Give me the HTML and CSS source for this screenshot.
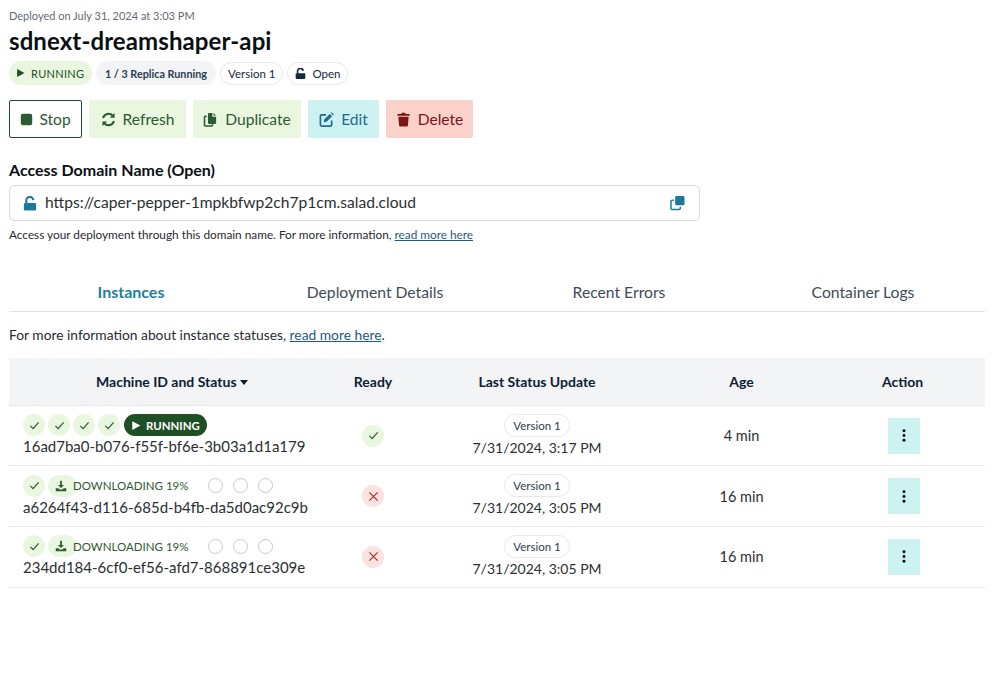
FILE: index.html
```html
<!DOCTYPE html>
<html lang="en">
<head>
<meta charset="UTF-8">
<title>sdnext-dreamshaper-api</title>
<link rel="stylesheet" href="styles.css">
</head>
<body>
<svg class="defs" width="0" height="0">
  <symbol id="i-check" viewBox="0 0 16 16"><path d="M2 8.500l4 4 8-9" fill="none" stroke="currentColor" stroke-width="1.800"/></symbol>
  <symbol id="i-play" viewBox="0 0 16 16"><path d="M2 1v14l13-7z" fill="currentColor"/></symbol>
  <symbol id="i-lock" viewBox="0 0 16 16"><rect x="1" y="7.500" width="14" height="8.500" rx="1.500" fill="currentColor"/><path d="M3.800 8V4.800a4 4 0 0 1 8-.6" fill="none" stroke="currentColor" stroke-width="2.400"/></symbol>
  <symbol id="i-download" viewBox="0 0 16 16"><path d="M6.800 1h2.400v5.500H12L8 10.500 4 6.500h2.800zM1 11h3.500L6 12.500h4l1.500-1.500H15v4H1z" fill="currentColor"/></symbol>
  <symbol id="i-x" viewBox="0 0 16 16"><path d="M2 2l12 12M14 2L2 14" fill="none" stroke="currentColor" stroke-width="1.600"/></symbol>
  <symbol id="i-dots" viewBox="0 0 4 14"><circle cx="2" cy="2" r="1.600" fill="currentColor"/><circle cx="2" cy="7" r="1.600" fill="currentColor"/><circle cx="2" cy="12" r="1.600" fill="currentColor"/></symbol>
  <symbol id="i-copy" viewBox="0 0 16 16"><rect x="5.500" y="0.500" width="10" height="10" rx="1.500" fill="currentColor"/><path d="M4 5H2.500A1.500 1.500 0 0 0 1 6.500v7A1.500 1.500 0 0 0 2.500 15h7a1.500 1.500 0 0 0 1.500-1.500V12" fill="none" stroke="currentColor" stroke-width="1.600"/></symbol>
</svg>

<p class="deployed">Deployed on July 31, 2024 at 3:03 PM</p>
<h1 class="title">sdnext-dreamshaper-api</h1>

<div class="badges">
  <span class="badge badge-green"><svg class="badge-icon"><use href="#i-play"/></svg>RUNNING</span>
  <span class="badge badge-grey">1 / 3 Replica Running</span>
  <span class="badge badge-outline">Version 1</span>
  <span class="badge badge-outline"><svg class="badge-icon lock-icon"><use href="#i-lock"/></svg>Open</span>
</div>

<div class="actions">
  <button class="btn btn-stop"><svg class="btn-icon stop-icon" viewBox="0 0 16 16"><rect x="1" y="1" width="14" height="14" rx="2.500" fill="currentColor"/></svg>Stop</button>
  <button class="btn btn-green btn-refresh"><svg class="btn-icon" viewBox="0 0 16 16"><path d="M2.200 6.500A6 6 0 0 1 12.500 4M13.800 9.500A6 6 0 0 1 3.500 12" fill="none" stroke="currentColor" stroke-width="2.200"/><path d="M14.500 1v5h-5zM1.500 15v-5h5z" fill="currentColor"/></svg>Refresh</button>
  <button class="btn btn-green btn-duplicate"><svg class="btn-icon" viewBox="0 0 16 16"><path d="M6.500 1H10v4h4v6.500a1.200 1.200 0 0 1-1.200 1.200H6.500a1.200 1.200 0 0 1-1.200-1.200V2.200A1.200 1.200 0 0 1 6.500 1zM11.200 1L14 3.800h-2.800z" fill="currentColor"/><path d="M4 4.500H2.800A1.200 1.200 0 0 0 1.600 5.700v8.100A1.200 1.200 0 0 0 2.800 15h6.100a1.200 1.200 0 0 0 1.200-1.200V13" fill="none" stroke="currentColor" stroke-width="1.700"/></svg>Duplicate</button>
  <button class="btn btn-blue"><svg class="btn-icon" viewBox="0 0 16 16"><path d="M7.500 3H2.800A1.300 1.300 0 0 0 1.500 4.300v9.400A1.300 1.300 0 0 0 2.800 15h9.400a1.300 1.300 0 0 0 1.300-1.300V9" fill="none" stroke="currentColor" stroke-width="1.800"/><path d="M11.500 2l2.500 2.500L8 10.500l-3 .5.500-3zM12.500 1l1-.7 2.300 2.300-.8 1z" fill="currentColor"/></svg>Edit</button>
  <button class="btn btn-red"><svg class="btn-icon" viewBox="0 0 16 16"><path d="M1.500 2h4L6.300.8h3.400l.8 1.200h4V4h-13zM2.500 5h11l-.8 9.500a1.200 1.200 0 0 1-1.200 1h-7a1.200 1.200 0 0 1-1.200-1z" fill="currentColor"/></svg>Delete</button>
</div>

<h2 class="domain-label">Access Domain Name (Open)</h2>
<div class="domain-box">
  <svg class="domain-lock"><use href="#i-lock"/></svg>
  <span class="domain-url">https://caper-pepper-1mpkbfwp2ch7p1cm.salad.cloud</span>
  <svg class="domain-copy"><use href="#i-copy"/></svg>
</div>
<p class="domain-help">Access your deployment through this domain name. For more information, <a href="#">read more here</a></p>

<div class="tabs">
  <div class="tab tab-active">Instances</div>
  <div class="tab">Deployment Details</div>
  <div class="tab">Recent Errors</div>
  <div class="tab">Container Logs</div>
</div>

<p class="status-help">For more information about instance statuses, <a href="#">read more here</a>.</p>

<table class="instances">
  <thead>
    <tr>
      <th class="col-machine">Machine ID and Status <span class="caret"></span></th>
      <th class="col-ready">Ready</th>
      <th class="col-update">Last Status Update</th>
      <th class="col-age">Age</th>
      <th>Action</th>
    </tr>
  </thead>
  <tbody>
    <tr>
      <td class="machine">
        <div class="steps">
          <span class="step"><svg><use href="#i-check"/></svg></span>
          <span class="step"><svg><use href="#i-check"/></svg></span>
          <span class="step"><svg><use href="#i-check"/></svg></span>
          <span class="step"><svg><use href="#i-check"/></svg></span>
          <span class="step-running"><svg><use href="#i-play"/></svg>RUNNING</span>
        </div>
        <div class="machine-id">16ad7ba0-b076-f55f-bf6e-3b03a1d1a179</div>
      </td>
      <td><span class="ready ready-yes"><svg><use href="#i-check"/></svg></span></td>
      <td class="update"><span class="version">Version 1</span><div class="when">7/31/2024, 3:17 PM</div></td>
      <td>4 min</td>
      <td class="action"><button class="more"><svg><use href="#i-dots"/></svg></button></td>
    </tr>
    <tr>
      <td class="machine">
        <div class="steps">
          <span class="step"><svg><use href="#i-check"/></svg></span>
          <span class="step step-active"><svg><use href="#i-download"/></svg><span class="step-text">DOWNLOADING 19%</span></span>
          <span class="step-empty"></span>
          <span class="step-empty"></span>
          <span class="step-empty"></span>
        </div>
        <div class="machine-id">a6264f43-d116-685d-b4fb-da5d0ac92c9b</div>
      </td>
      <td><span class="ready ready-no"><svg><use href="#i-x"/></svg></span></td>
      <td class="update"><span class="version">Version 1</span><div class="when">7/31/2024, 3:05 PM</div></td>
      <td>16 min</td>
      <td class="action"><button class="more"><svg><use href="#i-dots"/></svg></button></td>
    </tr>
    <tr>
      <td class="machine">
        <div class="steps">
          <span class="step"><svg><use href="#i-check"/></svg></span>
          <span class="step step-active"><svg><use href="#i-download"/></svg><span class="step-text">DOWNLOADING 19%</span></span>
          <span class="step-empty"></span>
          <span class="step-empty"></span>
          <span class="step-empty"></span>
        </div>
        <div class="machine-id">234dd184-6cf0-ef56-afd7-868891ce309e</div>
      </td>
      <td><span class="ready ready-no"><svg><use href="#i-x"/></svg></span></td>
      <td class="update"><span class="version">Version 1</span><div class="when">7/31/2024, 3:05 PM</div></td>
      <td>16 min</td>
      <td class="action"><button class="more"><svg><use href="#i-dots"/></svg></button></td>
    </tr>
  </tbody>
</table>
</body>
</html>
```

FILE: styles.css
```css
* {
  box-sizing: border-box;
}
html, body {
  overflow: hidden;
}
body {
  margin: 0;
  padding: 9px 15px 0 9px;
  height: 691px;
  background: #fff;
  color: #0a2133;
  font-family: Lato, sans-serif;
}
.defs {
  position: absolute;
}
a {
  color: #1d5a85;
}

.deployed {
  margin: 0;
  font-size: 11px;
  line-height: 14px;
  color: #5f6b76;
}
.title {
  margin: 4px 0 0;
  font-size: 24px;
  line-height: 28px;
  font-weight: 700;
  letter-spacing: 0.1px;
  color: #0a0f14;
}

.badges {
  display: flex;
  align-items: center;
  gap: 4px;
  margin-top: 6px;
}
.badge {
  display: flex;
  align-items: center;
  height: 24px;
  padding: 0 7px;
  border-radius: 12px;
  font-size: 11.500px;
  white-space: nowrap;
}
.badge-green {
  width: 83px;
  gap: 6px;
  font-size: 11px;
  letter-spacing: 0.3px;
  background: #eaf7e0;
  color: #1f4f24;
}
.badge-grey {
  width: 120px;
  justify-content: center;
  padding: 0;
  font-size: 10.800px;
  font-weight: 700;
  background: #f2f4f6;
  color: #2b3d4f;
}
.badge-outline {
  height: 23px;
  border: 1px solid #e6e8eb;
  color: #14293d;
}
.badge-icon {
  width: 9px;
  height: 10px;
}
.lock-icon {
  width: 11px;
  height: 11px;
  margin-right: 6px;
}

.actions {
  display: flex;
  gap: 7px;
  margin-top: 15px;
}
.btn {
  display: flex;
  align-items: center;
  justify-content: center;
  gap: 7px;
  width: 71px;
  height: 38px;
  padding: 0;
  border: 0;
  border-radius: 2px;
  font-family: inherit;
  font-size: 15.600px;
}
.btn-icon {
  width: 15px;
  height: 15px;
}
.stop-icon {
  width: 13px;
  height: 13px;
}
.btn-stop {
  width: 73px;
  gap: 6px;
  background: #fff;
  border: 1px solid #1f4f24;
  color: #2d5a32;
}
.btn-green {
  background: #eaf7e0;
  color: #2d5a32;
}
.btn-refresh {
  width: 97px;
}
.btn-duplicate {
  width: 108px;
}
.btn-blue {
  background: #ccf2f1;
  color: #1d6b94;
}
.btn-red {
  width: 87px;
  background: #fbd2ca;
  color: #7c1416;
}

.domain-label {
  margin: 22px 0 0;
  font-size: 16px;
  line-height: 20px;
  font-weight: 700;
  color: #0a0f14;
}
.domain-box {
  display: flex;
  align-items: center;
  width: 691px;
  height: 36px;
  margin-top: 5px;
  padding: 0 14px 0 13px;
  border: 1px solid #d5dbe0;
  border-radius: 5px;
}
.domain-lock {
  width: 14px;
  height: 15px;
  color: #1b7a9c;
}
.domain-url {
  flex: 1;
  margin: 0 0 2px 8px;
  font-size: 15.600px;
  color: #2a2f33;
}
.domain-copy {
  width: 15px;
  height: 16px;
  color: #1b7a9c;
}
.domain-help {
  margin: 7px 0 0;
  font-size: 11.800px;
  line-height: 14px;
  color: #1f2a33;
}

.tabs {
  display: grid;
  grid-template-columns: repeat(4, 1fr);
  margin-top: 33px;
  border-bottom: 1px solid #dfe2e5;
}
.tab {
  height: 36px;
  padding-top: 6px;
  text-align: center;
  font-size: 15.700px;
  line-height: 22px;
  color: #3c4c5a;
}
.tab-active {
  font-size: 16px;
  font-weight: 700;
  color: #1e7f9f;
}

.status-help {
  margin: 14px 0 0;
  font-size: 13.800px;
  line-height: 18px;
  color: #1f2a33;
}

.instances {
  width: 100%;
  margin-top: 14px;
  border-collapse: collapse;
  table-layout: fixed;
}
.instances th {
  height: 47.400px;
  background: #f3f4f6;
  border-bottom: 1px solid #e6e8eb;
  font-size: 14px;
  font-weight: 700;
  color: #0a2133;
  text-align: center;
}
.col-machine {
  width: 326px;
}
.col-ready {
  width: 76px;
}
.col-update {
  width: 252px;
}
.col-age {
  width: 157px;
}
.caret {
  display: inline-block;
  border: 4px solid transparent;
  border-top: 5px solid #0a2133;
  border-bottom: 0;
  vertical-align: 2px;
}
.instances td {
  height: 60.600px;
  padding: 0;
  border-bottom: 1px solid #e6e8eb;
  text-align: center;
  font-size: 14.500px;
  color: #2a2f33;
}
.instances td.machine {
  padding-left: 14px;
  text-align: left;
}
.instances td.action {
  padding-left: 3px;
}

.steps {
  display: flex;
  align-items: center;
  height: 22px;
  gap: 3px;
}
.step {
  display: flex;
  align-items: center;
  justify-content: center;
  width: 22px;
  height: 22px;
  border-radius: 50%;
  background: #eaf7e0;
  color: #2d5a32;
  flex: none;
}
.step svg {
  width: 11px;
  height: 11px;
}
.step-active {
  justify-content: flex-start;
  width: 29px;
  margin-right: 128px;
  padding-left: 7px;
  border-radius: 11px;
  white-space: nowrap;
}
.step-active svg {
  flex: none;
  width: 12px;
  height: 12px;
}
.step-text {
  margin-left: 6px;
  font-size: 11.500px;
  color: #2d5a32;
}
.step-running {
  display: flex;
  align-items: center;
  gap: 5px;
  height: 22px;
  padding: 0 7px;
  margin-left: 1px;
  border-radius: 11px;
  background: #1f4f24;
  color: #fff;
  font-size: 11.400px;
  font-weight: 700;
}
.step-running svg {
  width: 10px;
  height: 11px;
}
.step-empty {
  width: 15px;
  height: 15px;
  margin-right: 7px;
  border: 1px solid #c4c9ce;
  border-radius: 50%;
}
.machine-id {
  font-size: 15px;
  line-height: 21px;
  color: #2a2f33;
}

.ready {
  display: inline-flex;
  align-items: center;
  justify-content: center;
  width: 22px;
  height: 22px;
  border-radius: 50%;
  vertical-align: middle;
}
.ready svg {
  width: 11px;
  height: 11px;
}
.ready-yes {
  background: #eaf7e0;
  color: #2d5a32;
}
.ready-no {
  background: #fde3df;
  color: #a3272a;
}
.version {
  display: inline-block;
  height: 23px;
  padding: 0 8px;
  border: 1px solid #e6e8eb;
  border-radius: 12px;
  font-size: 11.500px;
  line-height: 21px;
  color: #2b3d4f;
}
.when {
  font-size: 14px;
  line-height: 21px;
}
.more {
  display: inline-flex;
  align-items: center;
  justify-content: center;
  width: 32px;
  height: 36px;
  border: 0;
  padding: 0;
  background: #ccf2f1;
  color: #0a0f14;
  vertical-align: middle;
}
.more svg {
  width: 4px;
  height: 13px;
}
```
